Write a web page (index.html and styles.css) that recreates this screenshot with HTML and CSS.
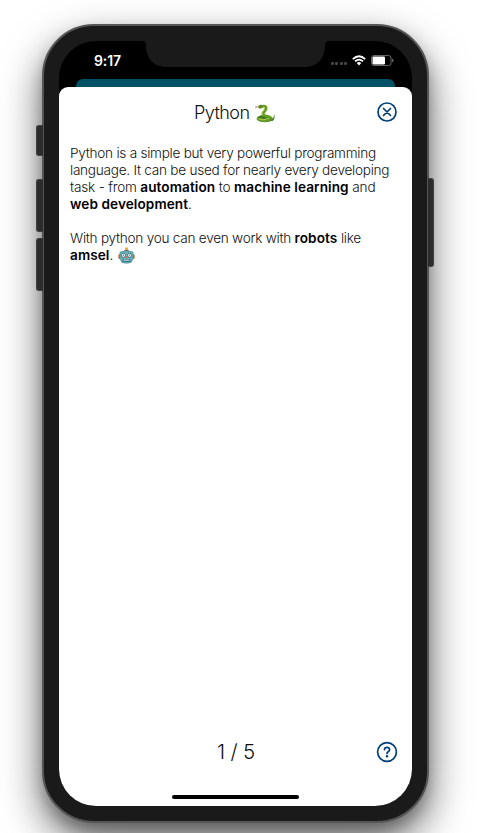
FILE: index.html
```html
<!DOCTYPE html>
<html lang="en">
<head>
<meta charset="utf-8">
<meta name="viewport" content="width=device-width, initial-scale=1">
<title>Python</title>
<link rel="stylesheet" href="styles.css">
</head>
<body>
<main class="phone">
  <i class="side-button mute"></i><i class="side-button volume-up"></i><i class="side-button volume-down"></i><i class="side-button power"></i>
  <div class="screen">
    <svg class="notch" viewBox="0 0 185 27" aria-hidden="true"><path d="M0 0H185Q182 .5 182 4C182 17 175 26 161 26H24C10 26 3 17 3 4Q3 .5 0 0Z"/></svg>
    <header class="status">
      <span class="time">9:17</span>
      <div class="indicators">
        <span class="signal"><i></i><i></i><i></i><i></i></span>
        <svg class="wifi" viewBox="0 0 14 11" aria-hidden="true"><path d="M.8 4.1Q7-1.5 13.2 4.1M3 6.4Q7 2.8 11 6.4"/><path class="wifi-base" d="M4.7 8Q7 6.2 9.3 8L7 10.4Z"/></svg>
        <svg class="battery" viewBox="0 0 23 11" aria-hidden="true"><rect class="shell" x=".5" y=".5" width="19.5" height="10" rx="2.5"/><rect class="charge" x="1.5" y="1.5" width="12.5" height="8" rx="1.3"/><path class="tip" d="M21 3.5Q22.5 4 22.5 5.5T21 7.5Z"/></svg>
      </div>
    </header>
    <div class="underlay"></div>
    <section class="sheet">
      <header class="title-bar">
        <h1>Python</h1>
        <svg class="snake" viewBox="0 0 21 19" aria-hidden="true">
          <path class="tongue" d="M3.5 3L.6 2.5M2 3L.5 4"/>
          <path class="tail" d="M14 14Q19 16 19.5 9.5Q20.4 15 17.5 17L12 17Z"/>
          <path class="snake-dark" d="M3 12.5Q9 9 16 12.5Q19 15 15 17.5Q8 19 3.5 17Q1 14.5 3 12.5Z"/>
          <path class="snake-body" d="M5 3.2Q10 1 11 3.5C12.2 6 7.5 8 8 10.3C8.5 12.5 15 11.5 15.5 14C15 17 8 17.5 3 15"/>
          <path class="snake-shine" d="M8 2.8Q10.5 3 9 5.5Q5.8 9 7.3 11M4 15Q9 17 13.5 14.5"/>
          <path class="snake-head" d="M3.2 2Q6-.2 8.7 1.2L7.5 4Q5 4.8 3.2 3.5Z"/>
          <circle class="snake-eye" cx="5.3" cy="2" r=".5"/>
        </svg>
        <button class="close" aria-label="Close"><svg viewBox="0 0 22 22"><circle cx="11" cy="11" r="9"/><path d="M7.5 7.5l7 7M14.5 7.5l-7 7"/></svg></button>
      </header>
      <article class="copy">
        <p><span class="line">Python is a simple but very powerful programming</span> <span class="line">language. It can be used for nearly every developing</span> <span class="line emphasis">task - from <b>automation</b> to <b>machine learning</b> and</span> <span class="line"><b>web development</b>.</span></p>
        <p><span class="line">With python you can even work with <b>robots</b> like</span> <span class="line"><b>amsel</b>. <svg class="robot" viewBox="0 0 17 17" aria-hidden="true"><path class="cap" d="M5.5 5Q6 2.5 8.5 2.5T11.5 5Z"/><circle class="lamp" cx="8.5" cy="1.8" r="1.6"/><rect class="ears" x=".3" y="7" width="16.4" height="5" rx="1.5"/><path class="face" d="M2 5Q8.5 2.8 15 5V12L13 15.5Q8.5 17 4 15.5L2 12Z"/><rect class="jaw" x="4.3" y="12" width="8.4" height="3" rx="1"/><circle class="eye" cx="5.5" cy="8.3" r="2"/><circle class="eye" cx="11.5" cy="8.3" r="2"/><circle class="pupil" cx="5.5" cy="8.3" r=".8"/><circle class="pupil" cx="11.5" cy="8.3" r=".8"/><path class="nose" d="M8.5 9l1 2h-2Z"/><path class="mouth" d="M5.4 13.2H11.6"/></svg></span></p>
      </article>
      <footer class="pager">
        <span class="page">1 / 5</span>
        <button class="help" aria-label="Help"><svg viewBox="0 0 22 22"><circle cx="11" cy="11" r="9.4"/><path d="M8.5 8.6Q8.5 6.4 11 6.4T13.6 8.6Q13.6 10 12.2 10.7Q11 11.3 11 12.5"/><circle class="dot" cx="11" cy="15.3" r="1.2"/></svg></button>
      </footer>
      <div class="home-bar"></div>
    </section>
  </div>
</main>
</body>
</html>
```
FILE: styles.css
```css
* { box-sizing: border-box; }
html, body { width: 486px; height: 833px; margin: 0; overflow: hidden; }
body { padding: 24px 0 0 42px; background: #fff; font-family: Inter, "Liberation Sans", sans-serif; color: #111; }
.phone { position: relative; width: 387px; height: 799px; padding: 15px 15px 14px; border: 2px solid #555; border-radius: 52px; background: #1a1a1a; box-shadow: 0 18px 40px rgba(0,0,0,.6), 0 8px 14px rgba(0,0,0,.2); }
.screen { position: relative; display: flex; flex-direction: column; width: 353px; height: 765px; overflow: hidden; border-radius: 37px; background: #000; }
.notch { position: absolute; left: 84px; top: 0; width: 185px; height: 27px; fill: #1a1a1a; }
.side-button { position: absolute; left: -8px; width: 7px; border: 1px solid #414141; border-right: 0; border-radius: 3px 0 0 3px; background: #2c2c2c; }
.mute { top: 99px; height: 31px; }
.volume-up { top: 153px; height: 53px; }
.volume-down { top: 212px; height: 53px; }
.power { left: auto; right: -7px; top: 152px; height: 89px; width: 6px; border: 1px solid #414141; border-left: 0; border-radius: 0 3px 3px 0; }
.status { display: flex; justify-content: space-between; height: 38px; padding: 11px 18px 0 35px; color: #fff; }
.time { font-size: 14px; line-height: 17px; font-weight: 600; letter-spacing: -.1px; }
.indicators { display: flex; align-items: flex-start; padding-top: 3px; }
.signal { display: flex; gap: 1.4px; margin: 7px 5px 0 0; }
.signal i { width: 3px; height: 3px; border-radius: 1px; background: #454545; }
.wifi { width: 14px; height: 11px; margin-right: 5px; fill: none; stroke: #fff; stroke-width: 1.8; }
.wifi-base { fill: #fff; stroke: none; }
.battery { width: 23px; height: 11px; }
.shell { fill: none; stroke: #666; }
.charge { fill: #fff; }
.tip { fill: #666; }
.underlay { height: 8px; margin: 0 17px; border-radius: 7px 7px 0 0; background: #005066; box-shadow: 0 8px #005066; }
.sheet { position: relative; display: flex; flex-direction: column; flex: 1; border-radius: 9px 9px 0 0; background: #fff; }
.title-bar { display: flex; align-items: center; height: 50px; padding-left: 135px; }
h1 { width: 61px; margin: 2px 0 0; font-size: 18px; line-height: 24px; font-weight: 300; letter-spacing: -.55px; }
.snake { width: 21px; height: 19px; margin-top: 2px; }
.snake path { fill: none; stroke-linecap: round; }
.snake .tongue { stroke: #e47c88; stroke-width: .8; }
.snake .tail, .snake .snake-dark { fill: #477d19; }
.snake .snake-body { stroke: #659e24; stroke-width: 2.8; }
.snake .snake-shine { stroke: #b7cc55; stroke-width: 1; }
.snake .snake-head { fill: #659624; }
.snake-eye { fill: #172b0b; }
button { display: block; width: 22px; height: 22px; padding: 0; border: 0; background: none; color: #003f78; }
button svg { display: block; width: 22px; height: 22px; fill: none; stroke: currentColor; stroke-width: 1.7; stroke-linecap: round; }
.close { margin: 0 14px 0 auto; }
.copy { padding: 8px 0 0 11px; font-size: 13.6px; font-weight: 300; line-height: 17px; letter-spacing: -.26px; }
.copy p { margin: 0 0 17px; }
.line { display: block; width: max-content; height: 17px; white-space: nowrap; }
.emphasis { letter-spacing: -.2px; }
b { font-weight: 600; letter-spacing: .08px; color: #000; }
.robot { width: 17px; height: 17px; margin-left: 1px; vertical-align: -4px; }
.lamp { fill: #f5a331; }
.cap { fill: #596776; }
.ears { fill: #dc6c3b; }
.face { fill: #68b5bf; stroke: #457c88; stroke-width: .6; }
.jaw { fill: #397580; }
.eye { fill: #fff; stroke: #314c56; stroke-width: .7; }
.pupil { fill: #309bb3; }
.nose { fill: #d95744; }
.mouth { stroke: #d6eeee; stroke-width: 1; }
.pager { display: flex; align-items: center; height: 30px; margin: auto 14px 28px 158px; }
.page { font-size: 20.5px; line-height: 28px; font-weight: 300; letter-spacing: -.2px; }
.help { margin-left: auto; }
.dot { fill: currentColor; stroke: none; }
.home-bar { width: 127px; height: 4px; margin: 0 auto 7px; border-radius: 2px; background: #000; }
```
